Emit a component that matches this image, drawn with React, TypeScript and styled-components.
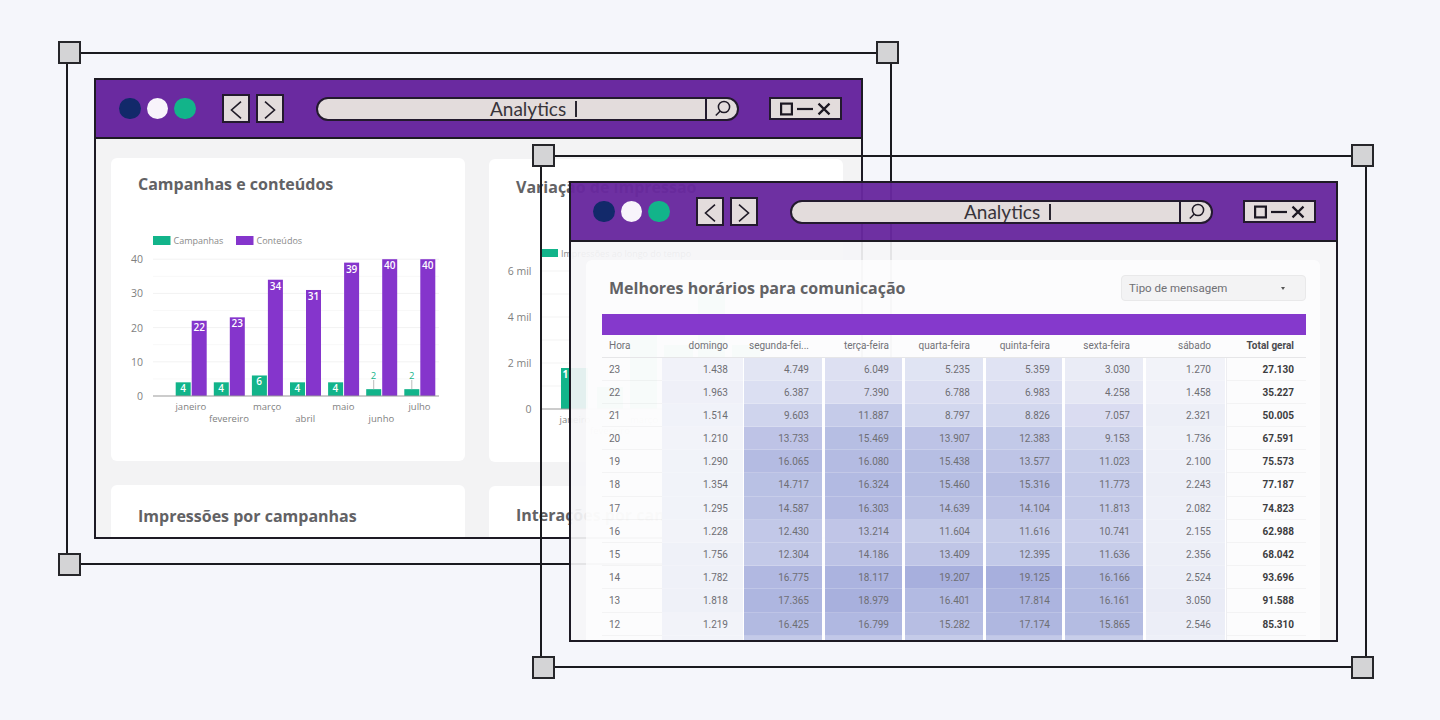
import React from "react";
import styled, { createGlobalStyle } from "styled-components";

const Global = createGlobalStyle`
  html, body { margin: 0; padding: 0; width: 1440px; height: 720px; overflow: hidden; background: #f5f6fb; }
  #root { width: 1440px; height: 720px; }
`;

const Canvas = styled.div`
  position: relative;
  width: 1440px;
  height: 720px;
  overflow: hidden;
  background: #f5f6fb;
  font-family: "Open Sans", "Liberation Sans", sans-serif;
`;

const Frame = styled.div<{ $x: number; $y: number; $w: number; $h: number }>`
  position: absolute;
  left: ${(p) => p.$x}px;
  top: ${(p) => p.$y}px;
  width: ${(p) => p.$w}px;
  height: ${(p) => p.$h}px;
  box-sizing: border-box;
  border: 2px solid #1a1a1f;
`;

const Handle = styled.span<{ $right?: boolean; $bottom?: boolean }>`
  position: absolute;
  width: 23px;
  height: 23px;
  box-sizing: border-box;
  background: #d4d4d6;
  border: 2px solid #26262a;
  ${(p) => (p.$right ? "right: -9px;" : "left: -10px;")}
  ${(p) => (p.$bottom ? "bottom: -13px;" : "top: -13px;")}
`;

const Window = styled.section<{ $x: number; $y: number; $w: number }>`
  position: absolute;
  left: ${(p) => p.$x}px;
  top: ${(p) => p.$y}px;
  width: ${(p) => p.$w}px;
  height: 461px;
  box-sizing: border-box;
  border: 2px solid #1d1a24;
  overflow: hidden;
  display: flex;
  flex-direction: column;
`;

const TitleBar = styled.header<{ $glass?: boolean; $inset: number }>`
  flex: none;
  height: 59px;
  box-sizing: border-box;
  border-bottom: 2px solid #1d1a24;
  background: ${(p) => (p.$glass ? "rgba(104, 40, 158, 0.96)" : "#6a2aa0")};
  display: flex;
  align-items: center;
  padding-left: ${(p) => p.$inset}px;
`;

const Dots = styled.div`
  display: flex;
  gap: 6px;
  margin-right: 26.5px;
`;

const Dot = styled.span<{ $color: string }>`
  width: 21.5px;
  height: 21.5px;
  border-radius: 50%;
  background: ${(p) => p.$color};
`;

const NavGroup = styled.div`
  display: flex;
  gap: 6px;
  margin-right: 32px;
`;

const NavButton = styled.button`
  width: 28px;
  height: 29px;
  padding: 0;
  box-sizing: border-box;
  border: 2px solid #231a2e;
  background: #e3dcdc;
  display: flex;
  align-items: center;
  justify-content: center;
  svg { display: block; margin-top: 2px; }
`;

const AddressBar = styled.div`
  width: 423px;
  height: 24px;
  box-sizing: border-box;
  border: 2px solid #231a2e;
  border-radius: 12px;
  background: #e3dcdc;
  display: flex;
  align-items: stretch;
  margin-right: 30px;
  overflow: hidden;
`;

const AddressText = styled.div`
  flex: 1;
  padding-left: 172px;
  display: flex;
  align-items: center;
  gap: 9px;
  font-family: Lato, "Liberation Sans", sans-serif;
  font-size: 19px;
  line-height: 20px;
  color: #38343a;
`;

const Caret = styled.span`
  width: 2px;
  height: 16px;
  background: #2a2630;
`;

const SearchBox = styled.div`
  flex: none;
  width: 32px;
  box-sizing: border-box;
  border-left: 2px solid #231a2e;
  display: flex;
  align-items: center;
  justify-content: center;
`;

const Controls = styled.div`
  width: 73px;
  height: 23px;
  box-sizing: border-box;
  border: 2px solid #231a2e;
  background: #e3dcdc;
  display: flex;
  align-items: center;
  justify-content: center;
`;

const Body = styled.div<{ $glass?: boolean }>`
  flex: 1;
  min-height: 0;
  background: ${(p) => (p.$glass ? "rgba(245, 245, 247, 0.92)" : "#f3f3f4")};
`;

const CardGrid = styled.div`
  display: grid;
  grid-template-columns: 354px 354px;
  column-gap: 24px;
  row-gap: 23px;
  padding: 19px 0 0 15px;
  align-items: start;
`;

const Card = styled.article<{ $shift?: boolean }>`
  height: 303px;
  background: #fff;
  border-radius: 6px;
  ${(p) => p.$shift && "margin-top: 1px;"}
  overflow: hidden;
`;

const CardTitle = styled.h2<{ $top: number }>`
  margin: 0;
  padding: ${(p) => p.$top}px 0 0 27px;
  font-family: "Open Sans", "Liberation Sans", sans-serif;
  font-size: 16px;
  line-height: 22px;
  font-weight: 700;
  color: #626265;
  white-space: nowrap;
`;

const Chart = styled.svg`
  display: block;
  font-family: "Open Sans", "Liberation Sans", sans-serif;
`;

const WideCard = styled.article`
  margin: 18px 16px 0 15px;
  height: 420px;
  background: rgba(255, 255, 255, 0.7);
  border-radius: 6px 6px 0 0;
`;

const WideHead = styled.div`
  display: flex;
  justify-content: space-between;
  align-items: center;
  padding: 15px 14px 0 23px;
  height: 26px;
  margin-bottom: 13px;
`;

const WideTitle = styled.h2`
  margin: 0;
  font-size: 16px;
  line-height: 22px;
  font-weight: 700;
  color: #626265;
`;

const Select = styled.div`
  position: relative;
  width: 185px;
  height: 26px;
  box-sizing: border-box;
  padding-left: 7px;
  background: #f3f3f4;
  border: 1px solid #e9e9ea;
  border-radius: 4px;
  font-family: Roboto, "Liberation Sans", sans-serif;
  font-size: 11.5px;
  line-height: 24px;
  color: #707074;
  &::after {
    content: "";
    position: absolute;
    right: 20px;
    top: 11px;
    border-left: 2px solid transparent;
    border-right: 2px solid transparent;
    border-top: 3px solid #555;
  }
`;

const Band = styled.div`
  height: 21px;
  margin: 0 14px 0 16px;
  background: rgba(131, 53, 203, 0.98);
`;

const Table = styled.div`
  margin: 0 14px 0 16px;
  font-family: Roboto, "Liberation Sans", sans-serif;
  font-size: 10px;
  color: #6e6e74;
`;

const columns = "60px 82px 81px 80px 81px 79px 81px 80px 80px";

const HeadRow = styled.div`
  display: grid;
  grid-template-columns: ${columns};
  height: 22.5px;
  box-sizing: border-box;
  border-bottom: 1px solid #e6e6e8;
  line-height: 21px;
`;

const Row = styled.div`
  display: grid;
  grid-template-columns: ${columns};
  height: 23.2px;
  line-height: 23px;
`;

const Cell = styled.div<{ $kind: "hour" | "heat" | "total"; $gap?: number; $pad: number }>`
  box-sizing: border-box;
  text-align: ${(p) => (p.$kind === "hour" ? "left" : "right")};
  padding: ${(p) => (p.$kind === "hour" ? "0 0 0 7px" : `0 ${p.$pad}px 0 0`)};
  border-right: ${(p) => p.$gap ?? 0}px solid rgba(255, 255, 255, 0.85);
  background-clip: padding-box;
  white-space: nowrap;
  box-shadow: inset 0 -1px 0 ${(p) => (p.$kind === "heat" ? "rgba(255,255,255,.2)" : "rgba(0,0,0,.035)")};
  ${(p) => p.$kind === "total" && "font-weight: 700; color: #3c3c40; border-left: 1px solid #eeeef2;"}
`;

const HeadCell = styled.div<{ $left?: boolean; $bold?: boolean; $pad: number }>`
  text-align: ${(p) => (p.$left ? "left" : "right")};
  padding: ${(p) => (p.$left ? "0 0 0 7px" : `0 ${p.$pad}px 0 0`)};
  font-weight: ${(p) => (p.$bold ? 700 : 400)};
  color: ${(p) => (p.$bold ? "#4a4a4e" : "#717176")};
  white-space: nowrap;
`;

const Chevron = ({ left }: { left?: boolean }) => (
  <svg width="12" height="18" viewBox="0 0 12 18" fill="none" stroke="#1f1a26" strokeWidth="1.6">
    <path d={left ? "M11 0.6 L1.5 9 L11 17.4" : "M1 0.6 L10.5 9 L1 17.4"} />
  </svg>
);

const Glass = () => (
  <svg width="17" height="17" viewBox="0 0 17 17" fill="none" stroke="#1f1a26" strokeWidth="1.5">
    <circle cx="10" cy="7" r="5.6" />
    <path d="M6 11.2 L1.8 15.6" />
  </svg>
);

const ControlGlyphs = () => (
  <svg width="51" height="14" viewBox="0 0 51 14" fill="none" stroke="#1c1822" strokeWidth="2.2">
    <rect x="1.1" y="1.6" width="10.8" height="10.8" />
    <path d="M17 7 H33" />
    <path d="M38.5 1.6 L49.5 12.4 M49.5 1.6 L38.5 12.4" />
  </svg>
);

const WindowBar = ({ glass, inset }: { glass?: boolean; inset: number }) => (
  <TitleBar $glass={glass} $inset={inset}>
    <Dots>
      <Dot $color="#12296a" />
      <Dot $color="#f8f4fb" />
      <Dot $color="#12b48a" />
    </Dots>
    <NavGroup>
      <NavButton><Chevron left /></NavButton>
      <NavButton><Chevron /></NavButton>
    </NavGroup>
    <AddressBar>
      <AddressText>
        <span>Analytics</span>
        <Caret />
      </AddressText>
      <SearchBox><Glass /></SearchBox>
    </AddressBar>
    <Controls><ControlGlyphs /></Controls>
  </TitleBar>
);

const corners = (
  <>
    <Handle />
    <Handle $right />
    <Handle $bottom />
    <Handle $right $bottom />
  </>
);

const PURPLE = "#8535cc";
const GREEN = "#12b48a";
const AXIS = "#7f7f7f";

const campaigns = [
  { m: "janeiro", g: 4, p: 22, low: false },
  { m: "fevereiro", g: 4, p: 23, low: true },
  { m: "março", g: 6, p: 34, low: false },
  { m: "abril", g: 4, p: 31, low: true },
  { m: "maio", g: 4, p: 39, low: false },
  { m: "junho", g: 2, p: 40, low: true },
  { m: "julho", g: 2, p: 40, low: false },
];

const CampaignChart = () => {
  const y0 = 396;
  const u = 3.42;
  return (
    <Chart width="354" height="266" viewBox="111 195 354 266">
      <rect x="153" y="236" width="17.5" height="9" fill={GREEN} />
      <text x="173.5" y="244" fontSize="9" fill="#8a8a8a">Campanhas</text>
      <rect x="236" y="236" width="17.5" height="9" fill={PURPLE} />
      <text x="256.5" y="244" fontSize="9" fill="#8a8a8a">Conteúdos</text>
      {[5, 10, 15, 20, 25, 30, 35, 40].map((v) => (
        <line key={v} x1="153" x2="439" y1={y0 - v * u} y2={y0 - v * u} stroke={v % 10 ? "#f8f8f8" : "#f2f2f2"} />
      ))}
      {[0, 10, 20, 30, 40].map((v) => (
        <text key={v} x="143" y={y0 - v * u + 4} fontSize="10.5" textAnchor="end" fill={AXIS}>{v}</text>
      ))}
      {campaigns.map((c, i) => {
        const gx = 175.7 + i * 38.1;
        const px = 191.7 + i * 38.1;
        const gTop = y0 - c.g * u;
        const pTop = y0 - c.p * u;
        return (
          <g key={c.m}>
            <rect x={gx} y={gTop} width="15" height={c.g * u} fill={GREEN} />
            <rect x={px} y={pTop} width="15" height={c.p * u} fill={PURPLE} />
            {c.g > 2 ? (
              <text x={gx + 7.3} y={gTop + 9.5} fontSize="10" fontWeight="600" textAnchor="middle" fill="#fff">{c.g}</text>
            ) : (
              <>
                <line x1={gx + 7.5} x2={gx + 7.5} y1="380" y2={gTop} stroke="#bcbcbc" />
                <text x={gx + 7.3} y="379" fontSize="9.5" textAnchor="middle" fill={GREEN}>{c.g}</text>
              </>
            )}
            <text x={px + 7.5} y={pTop + 10} fontSize="10" fontWeight="600" textAnchor="middle" fill="#fff">{c.p}</text>
            <text x={px - 0.8} y={c.low ? 422 : 409.5} fontSize="9.5" textAnchor="middle" fill={AXIS}>{c.m}</text>
          </g>
        );
      })}
      <line x1="153" x2="439" y1={y0} y2={y0} stroke="#9a9a9a" strokeWidth="1.2" />
    </Chart>
  );
};

const impressionBars = [
  { x: 561, w: 27, top: 368 },
  { x: 597, w: 26, top: 387 },
  { x: 630, w: 27, top: 315 },
  { x: 664, w: 29, top: 345 },
  { x: 698, w: 27, top: 293 },
  { x: 732, w: 28, top: 345 },
  { x: 767, w: 26, top: 380 },
];

const impressionMonths = [
  { m: "janeiro", x: 575, y: 423 },
  { m: "fevereiro", x: 610, y: 434 },
  { m: "março", x: 644, y: 423 },
  { m: "abril", x: 678, y: 434 },
  { m: "maio", x: 712, y: 423 },
  { m: "junho", x: 746, y: 434 },
  { m: "julho", x: 780, y: 423 },
];

const ImpressionChart = () => (
  <Chart width="354" height="264" viewBox="489 198 354 264">
    <rect x="541" y="249" width="17" height="8" fill={GREEN} />
    <text x="561" y="256.5" fontSize="9" fill="#8a8a8a">Impressões ao longo do tempo</text>
    {[1, 2, 3, 4, 5, 6].map((v) => (
      <line key={v} x1="541" x2="830" y1={409 - v * 23} y2={409 - v * 23} stroke="#f3f3f3" />
    ))}
    {[["6 mil", 271], ["4 mil", 317], ["2 mil", 363], ["0", 409]].map(([t, y]) => (
      <text key={t} x="531.5" y={Number(y) + 4} fontSize="10.5" textAnchor="end" fill={AXIS}>{t}</text>
    ))}
    {impressionBars.map((b) => (
      <rect key={b.x} x={b.x} y={b.top} width={b.w} height={409 - b.top} fill={GREEN} />
    ))}
    <text x="562.5" y="378" fontSize="10" fontWeight="700" fill="#fff">1</text>
    {impressionMonths.map((l) => (
      <text key={l.m} x={l.x} y={l.y} fontSize="9.5" textAnchor="middle" fill={AXIS}>{l.m}</text>
    ))}
    <line x1="541" x2="830" y1="409" y2="409" stroke="#9a9a9a" strokeWidth="1.2" />
  </Chart>
);

const heads = ["domingo", "segunda-fei...", "terça-feira", "quarta-feira", "quinta-feira", "sexta-feira", "sábado", "Total geral"];
const pads = [15, 13, 13, 13, 12, 13, 14, 12];
const gaps = [1, 3, 3, 3, 3, 3, 1, 0];

const rows: string[][] = [
  ["23", "1.438", "4.749", "6.049", "5.235", "5.359", "3.030", "1.270", "27.130"],
  ["22", "1.963", "6.387", "7.390", "6.788", "6.983", "4.258", "1.458", "35.227"],
  ["21", "1.514", "9.603", "11.887", "8.797", "8.826", "7.057", "2.321", "50.005"],
  ["20", "1.210", "13.733", "15.469", "13.907", "12.383", "9.153", "1.736", "67.591"],
  ["19", "1.290", "16.065", "16.080", "15.438", "13.577", "11.023", "2.100", "75.573"],
  ["18", "1.354", "14.717", "16.324", "15.460", "15.316", "11.773", "2.243", "77.187"],
  ["17", "1.295", "14.587", "16.303", "14.639", "14.104", "11.813", "2.082", "74.823"],
  ["16", "1.228", "12.430", "13.214", "11.604", "11.616", "10.741", "2.155", "62.988"],
  ["15", "1.756", "12.304", "14.186", "13.409", "12.395", "11.636", "2.356", "68.042"],
  ["14", "1.782", "16.775", "18.117", "19.207", "19.125", "16.166", "2.524", "93.696"],
  ["13", "1.818", "17.365", "18.979", "16.401", "17.814", "16.161", "3.050", "91.588"],
  ["12", "1.219", "16.425", "16.799", "15.282", "17.174", "15.865", "2.546", "85.310"],
];
const clippedRow = ["1.102", "12.100", "12.500", "11.900", "12.200", "11.000", "2.000", ""];

const heat = (text: string) => {
  const t = Math.min(1, Number(text.replace(".", "")) / 19207);
  const mix = (a: number, b: number) => Math.round(a + (b - a) * t);
  return `rgba(${mix(246, 163)}, ${mix(247, 172)}, ${mix(251, 220)}, 0.96)`;
};

const HeatTable = () => (
  <Table>
    <HeadRow>
      <HeadCell $left $pad={0}>Hora</HeadCell>
      {heads.map((h, i) => (
        <HeadCell key={h} $pad={pads[i] + gaps[i]} $bold={i === 7}>{h}</HeadCell>
      ))}
    </HeadRow>
    {rows.map(([hour, ...vals]) => (
      <Row key={hour}>
        <Cell $kind="hour" $pad={0}>{hour}</Cell>
        {vals.map((v, i) => (
          <Cell
            key={i}
            $kind={i === 7 ? "total" : "heat"}
            $gap={gaps[i]}
            $pad={pads[i]}
            style={i === 7 ? undefined : { backgroundColor: heat(v) }}
          >
            {v}
          </Cell>
        ))}
      </Row>
    ))}
    <Row>
      <Cell $kind="hour" $pad={0} />
      {clippedRow.map((v, i) => (
        <Cell
          key={i}
          $kind={i === 7 ? "total" : "heat"}
          $gap={gaps[i]}
          $pad={pads[i]}
          style={i === 7 ? undefined : { backgroundColor: heat(v) }}
        />
      ))}
    </Row>
  </Table>
);

export default function App() {
  return (
    <Canvas>
      <Global />
      <Window $x={94} $y={78} $w={769}>
        <WindowBar inset={23} />
        <Body>
          <CardGrid>
            <Card>
              <CardTitle $top={15}>Campanhas e conteúdos</CardTitle>
              <CampaignChart />
            </Card>
            <Card $shift>
              <CardTitle $top={17}>Variação de impressão</CardTitle>
              <ImpressionChart />
            </Card>
            <Card>
              <CardTitle $top={20}>Impressões por campanhas</CardTitle>
            </Card>
            <Card $shift>
              <CardTitle $top={18}>Interações por campanha</CardTitle>
            </Card>
          </CardGrid>
        </Body>
      </Window>
      <Frame $x={66} $y={52} $w={826} $h={513}>{corners}</Frame>
      <Frame $x={540} $y={155} $w={827} $h={513}>{corners}</Frame>
      <Window $x={569} $y={181} $w={769}>
        <WindowBar glass inset={22} />
        <Body $glass>
          <WideCard>
            <WideHead>
              <WideTitle>Melhores horários para comunicação</WideTitle>
              <Select>Tipo de mensagem</Select>
            </WideHead>
            <Band />
            <HeatTable />
          </WideCard>
        </Body>
      </Window>
    </Canvas>
  );
}
